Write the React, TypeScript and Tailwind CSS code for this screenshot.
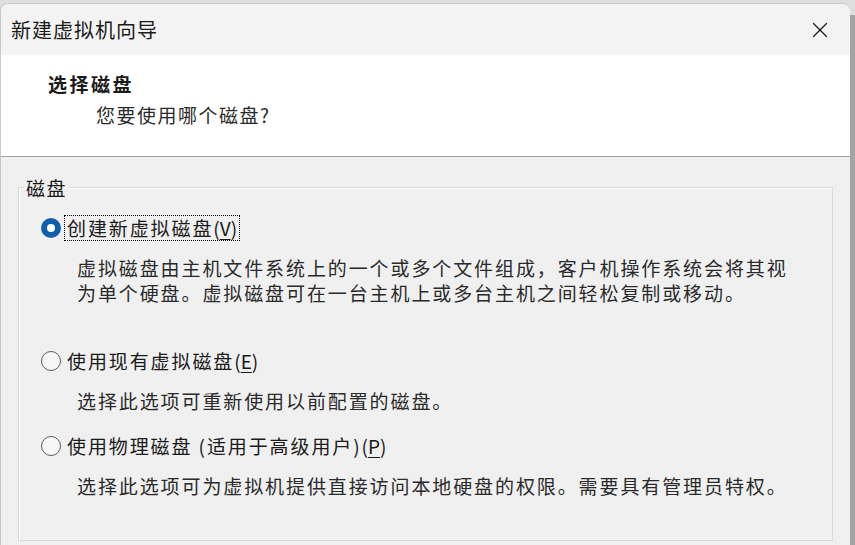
import { X } from 'lucide-react'

const FONT = { fontFamily: '"Noto Sans CJK SC", "Noto Sans", sans-serif' }

function Radio({ checked }: { checked?: boolean }) {
  if (checked) {
    return (
      <span className="flex h-[20px] w-[20px] shrink-0 items-center justify-center rounded-full bg-[#0f5fae]">
        <span className="h-[8px] w-[8px] rounded-full bg-white" />
      </span>
    )
  }
  return <span className="h-[20px] w-[20px] shrink-0 rounded-full border border-[#5a5a5a] bg-[#f7f7f7]" />
}

function Option({ label, mnemonic, checked }: { label: string; mnemonic: string; checked?: boolean }) {
  return (
    <div className="flex h-[26px] items-center">
      <Radio checked={checked} />
      <span
        className={`ml-[3px] flex h-[26px] items-center px-[2px] text-[19px] leading-[24px] tracking-[1.9px] text-[#1a1a1a] ${checked ? 'border border-dotted border-black' : 'border border-transparent'}`}
      >
        {label}
        <span className="tracking-normal">
          (<span className="underline underline-offset-[3px]">{mnemonic}</span>)
        </span>
      </span>
    </div>
  )
}

export default function App() {
  return (
    <div className="flex h-[545px] w-[855px] overflow-hidden bg-[#dedede] pt-[3px]" style={FONT}>
      {/* dialog window */}
      <div className="flex w-[850px] flex-col overflow-hidden rounded-t-[8px] border-l border-t border-[#c8c8c8] bg-[#f0f0f0]">
        {/* title bar */}
        <div className="flex h-[51px] shrink-0 items-center justify-between bg-[#f3f3f3] pl-[10px] pr-[17px]">
          <span className="text-[20px] leading-[24px] tracking-[1px] text-[#1a1a1a]">新建虚拟机向导</span>
          <X size={26} strokeWidth={1.2} className="text-[#1a1a1a]" />
        </div>

        {/* header */}
        <div className="flex h-[102px] shrink-0 flex-col border-b border-[#a0a0a0] bg-white pl-[47px] pt-[17px]">
          <span className="text-[19px] font-bold leading-[24px] tracking-[2.5px] text-[#1a1a1a]">选择磁盘</span>
          <span className="ml-[48px] mt-[7px] text-[19px] leading-[24px] tracking-[1.5px] text-[#2a2a2a]">您要使用哪个磁盘?</span>
        </div>

        {/* body */}
        <div className="flex-1 pl-[17px] pt-[20px]">
          <fieldset className="h-[364px] w-[815px] border border-[#d9d9d9] shadow-[inset_1px_1px_0_#ffffff]">
            <legend className="ml-[5px] px-[2px] text-[19px] leading-[21px] tracking-[1.5px] text-[#1a1a1a]">磁盘</legend>

            <div className="pl-[22px]">
              <div className="mt-[17px]">
                <Option label="创建新虚拟磁盘" mnemonic="V" checked />
              </div>
              <div className="ml-[36px] mt-[14px] text-[19px] leading-[25px] tracking-[1.9px] text-[#2a2a2a]">
                <div>虚拟磁盘由主机文件系统上的一个或多个文件组成，客户机操作系统会将其视</div>
                <div>为单个硬盘。虚拟磁盘可在一台主机上或多台主机之间轻松复制或移动。</div>
              </div>

              <div className="mt-[43px]">
                <Option label="使用现有虚拟磁盘" mnemonic="E" />
              </div>
              <div className="ml-[36px] mt-[14px] text-[19px] leading-[25px] tracking-[1.9px] text-[#2a2a2a]">
                选择此选项可重新使用以前配置的磁盘。
              </div>

              <div className="mt-[20px]">
                <Option label="使用物理磁盘 (适用于高级用户)" mnemonic="P" />
              </div>
              <div className="ml-[36px] mt-[14px] text-[19px] leading-[25px] tracking-[1.9px] text-[#2a2a2a]">
                选择此选项可为虚拟机提供直接访问本地硬盘的权限。需要具有管理员特权。
              </div>
            </div>
          </fieldset>
        </div>
      </div>

      {/* edge of the window behind */}
      <div className="flex w-[5px] flex-col">
        <div className="h-[12px] bg-[#dedede]" />
        <div className="flex-1 bg-[#a3a3a3]" />
      </div>
    </div>
  )
}
